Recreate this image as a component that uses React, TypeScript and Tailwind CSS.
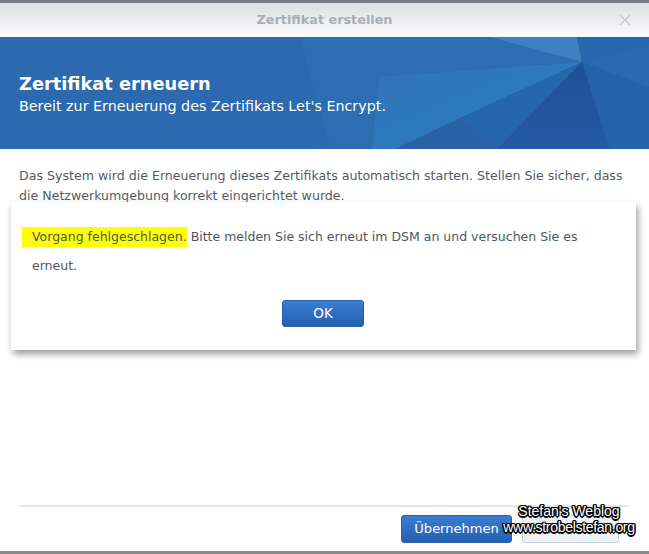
import React from "react";

const font = { fontFamily: '"DejaVu Sans", Verdana, sans-serif' };

function BannerArt() {
  return (
    <svg className="absolute inset-0 h-full w-full" viewBox="0 0 649 112" preserveAspectRatio="none">
      <defs>
        <linearGradient id="lg1" x1="0" y1="0" x2="1" y2="1">
          <stop offset="0" stopColor="#3276b8" />
          <stop offset="1" stopColor="#2a82cd" />
        </linearGradient>
        <linearGradient id="lg2" x1="0" y1="0" x2="0" y2="1">
          <stop offset="0" stopColor="#1e5096" />
          <stop offset="1" stopColor="#2559a1" />
        </linearGradient>
      </defs>
      <polygon points="300,0 490,0 582,25 460,81 360,112 330,112" fill="#2d6db2" />
      <polygon points="380,40 582,25 460,81 420,112 372,112" fill="url(#lg1)" opacity="0.8" />
      <polygon points="490,0 577,0 582,25" fill="#3d7fbf" />
      <polygon points="577,0 649,0 649,8 582,25" fill="#2767ad" />
      <polygon points="582,25 460,81 497,112" fill="#2565ab" />
      <polygon points="460,81 497,112 395,112" fill="#2961a7" />
      <polygon points="582,25 497,112 610,112" fill="url(#lg2)" />
      <polygon points="582,25 649,8 649,112 610,112" fill="#2562a8" />
      <polygon points="582,25 649,8 649,50" fill="#2869af" />
    </svg>
  );
}

export default function App() {
  return (
    <div className="relative flex h-[554px] w-[649px] flex-col overflow-hidden bg-white" style={font}>
      <div className="h-[3px] bg-[#787c84]" />
      <div className="relative flex h-[34px] items-center justify-center bg-gradient-to-b from-[#dcdfe3] to-[#fbfbfc]">
        <span className="text-[12.8px] font-bold text-[#a9aeb4]">Zertifikat erstellen</span>
        <svg className="absolute right-[18px] top-[11px] h-[12px] w-[12px]" viewBox="0 0 12 12">
          <path d="M1 1 L11 11 M11 1 L1 11" stroke="#c5c8cc" strokeWidth="1.4" />
        </svg>
      </div>
      <div className="relative h-[112px] bg-[#2c69af]">
        <BannerArt />
        <div className="relative flex h-full flex-col justify-center pl-[19px] pt-[2px] text-white">
          <div className="text-[17.8px] font-bold leading-[24px]">Zertifikat erneuern</div>
          <div className="text-[14.3px] leading-[20px]">Bereit zur Erneuerung des Zertifikats Let's Encrypt.</div>
        </div>
      </div>
      <div className="flex-1 px-[19px] pt-[17px]">
        <p className="text-[12.6px] leading-[20px] text-[#545b63]">
          Das System wird die Erneuerung dieses Zertifikats automatisch starten. Stellen Sie sicher, dass
          <br />
          die Netzwerkumgebung korrekt eingerichtet wurde.
        </p>
      </div>
      <div className="mx-[19px] mr-[20px] h-[2px] bg-gradient-to-b from-[#ececec] to-[#dedede]" />
      <div className="flex justify-end gap-[10px] pb-[8px] pr-[30px] pt-[8px]">
        <button className="h-[28px] w-[111px] rounded-[3px] border border-[#2a5ea8] bg-gradient-to-b from-[#3b7dd2] to-[#2460b0] text-[13px] text-white">
          Übernehmen
        </button>
        <button className="h-[28px] w-[97px] rounded-[3px] border border-[#c6cfd9] bg-[#eef2f7] text-[13px] text-[#4a4a4a]">
          Abbrechen
        </button>
      </div>
      <div className="h-[3px] bg-[#8a8a8a]" />

      <div className="absolute left-[11px] top-[202px] w-[625px] bg-white pb-[23px] pt-[20px] shadow-[2px_4px_7px_rgba(0,0,0,0.4)]">
        <p className="pl-[21px] text-[12.5px] leading-[29px] text-[#4f565e]">
          <span className="-ml-[10px] inline-block h-[20px] bg-[#ffff00] pl-[10px] leading-[20px]">Vorgang fehlgeschlagen.</span>{" "}
          Bitte melden Sie sich erneut im DSM an und versuchen Sie es
          <br />
          erneut.
        </p>
        <div className="mt-[20px] flex justify-center">
          <button className="ml-[-1px] h-[27px] w-[82px] rounded-[3px] border border-[#2a5ea8] bg-gradient-to-b from-[#3b7dd2] to-[#2460b0] text-[13.5px] text-white">
            OK
          </button>
        </div>
      </div>

      <div
        className="absolute left-[502px] top-[503px] flex w-[134px] flex-col items-center text-[14px] leading-[16px] text-white [text-shadow:-1px_-1px_0_#000,1px_-1px_0_#000,-1px_1px_0_#000,1px_1px_0_#000,0_1.5px_0_#000,0_-1.5px_0_#000,1.5px_0_0_#000,-1.5px_0_0_#000]"
        style={{ fontFamily: '"Liberation Sans", Arial, sans-serif' }}
      >
        <span>Stefan's Weblog</span>
        <span className="tracking-[-0.3px]">www.strobelstefan.org</span>
      </div>
    </div>
  );
}
